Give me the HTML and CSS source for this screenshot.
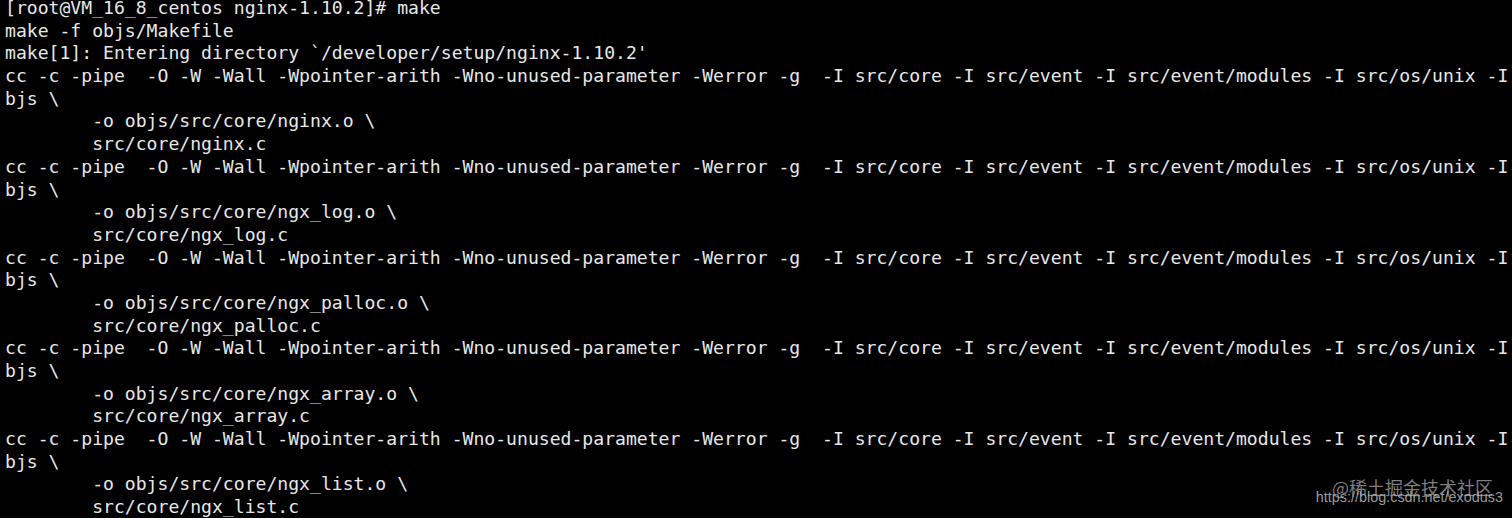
FILE: index.html
```html
<!DOCTYPE html>
<html>
<head>
<meta charset="utf-8">
<link rel="stylesheet" href="styles.css">
</head>
<body>
<div class="term">
<pre class="out">[root@VM_16_8_centos nginx-1.10.2]# make
make -f objs/Makefile
make[1]: Entering directory `/developer/setup/nginx-1.10.2'
cc -c -pipe  -O -W -Wall -Wpointer-arith -Wno-unused-parameter -Werror -g  -I src/core -I src/event -I src/event/modules -I src/os/unix -I
bjs \
        -o objs/src/core/nginx.o \
        src/core/nginx.c
cc -c -pipe  -O -W -Wall -Wpointer-arith -Wno-unused-parameter -Werror -g  -I src/core -I src/event -I src/event/modules -I src/os/unix -I
bjs \
        -o objs/src/core/ngx_log.o \
        src/core/ngx_log.c
cc -c -pipe  -O -W -Wall -Wpointer-arith -Wno-unused-parameter -Werror -g  -I src/core -I src/event -I src/event/modules -I src/os/unix -I
bjs \
        -o objs/src/core/ngx_palloc.o \
        src/core/ngx_palloc.c
cc -c -pipe  -O -W -Wall -Wpointer-arith -Wno-unused-parameter -Werror -g  -I src/core -I src/event -I src/event/modules -I src/os/unix -I
bjs \
        -o objs/src/core/ngx_array.o \
        src/core/ngx_array.c
cc -c -pipe  -O -W -Wall -Wpointer-arith -Wno-unused-parameter -Werror -g  -I src/core -I src/event -I src/event/modules -I src/os/unix -I
bjs \
        -o objs/src/core/ngx_list.o \
        src/core/ngx_list.c</pre>
<div class="wm">
<span class="wm-cn">@稀土掘金技术社区</span>
<span class="wm-url">https://blog.csdn.net/exodus3</span>
</div>
</div>
</body>
</html>
```
FILE: styles.css
```css
html, body {
  margin: 0;
  padding: 0;
  background: #000;
  overflow: hidden;
}
.term {
  position: relative;
  width: 1512px;
  height: 518px;
  overflow: hidden;
  background: #000;
}
.out {
  margin: -3px 0 0 0;
  padding: 0 0 0 5px;
  font-family: "DejaVu Sans Mono", monospace;
  font-size: 18.1px;
  line-height: 22.68px;
  color: #e8e8e8;
  white-space: pre;
}
.wm {
  position: absolute;
  right: 9px;
  bottom: 8px;
  width: 200px;
  height: 34px;
}
.wm-cn {
  position: absolute;
  right: 10px;
  top: 0;
  font-family: "Noto Sans CJK SC", sans-serif;
  font-size: 18px;
  line-height: 22px;
  color: rgba(170, 170, 170, 0.75);
  white-space: nowrap;
}
.wm-url {
  position: absolute;
  right: 0;
  top: 12px;
  font-family: "Liberation Sans", Arial, sans-serif;
  font-size: 14.4px;
  line-height: 18px;
  color: rgba(185, 185, 185, 0.85);
  white-space: nowrap;
}
```
